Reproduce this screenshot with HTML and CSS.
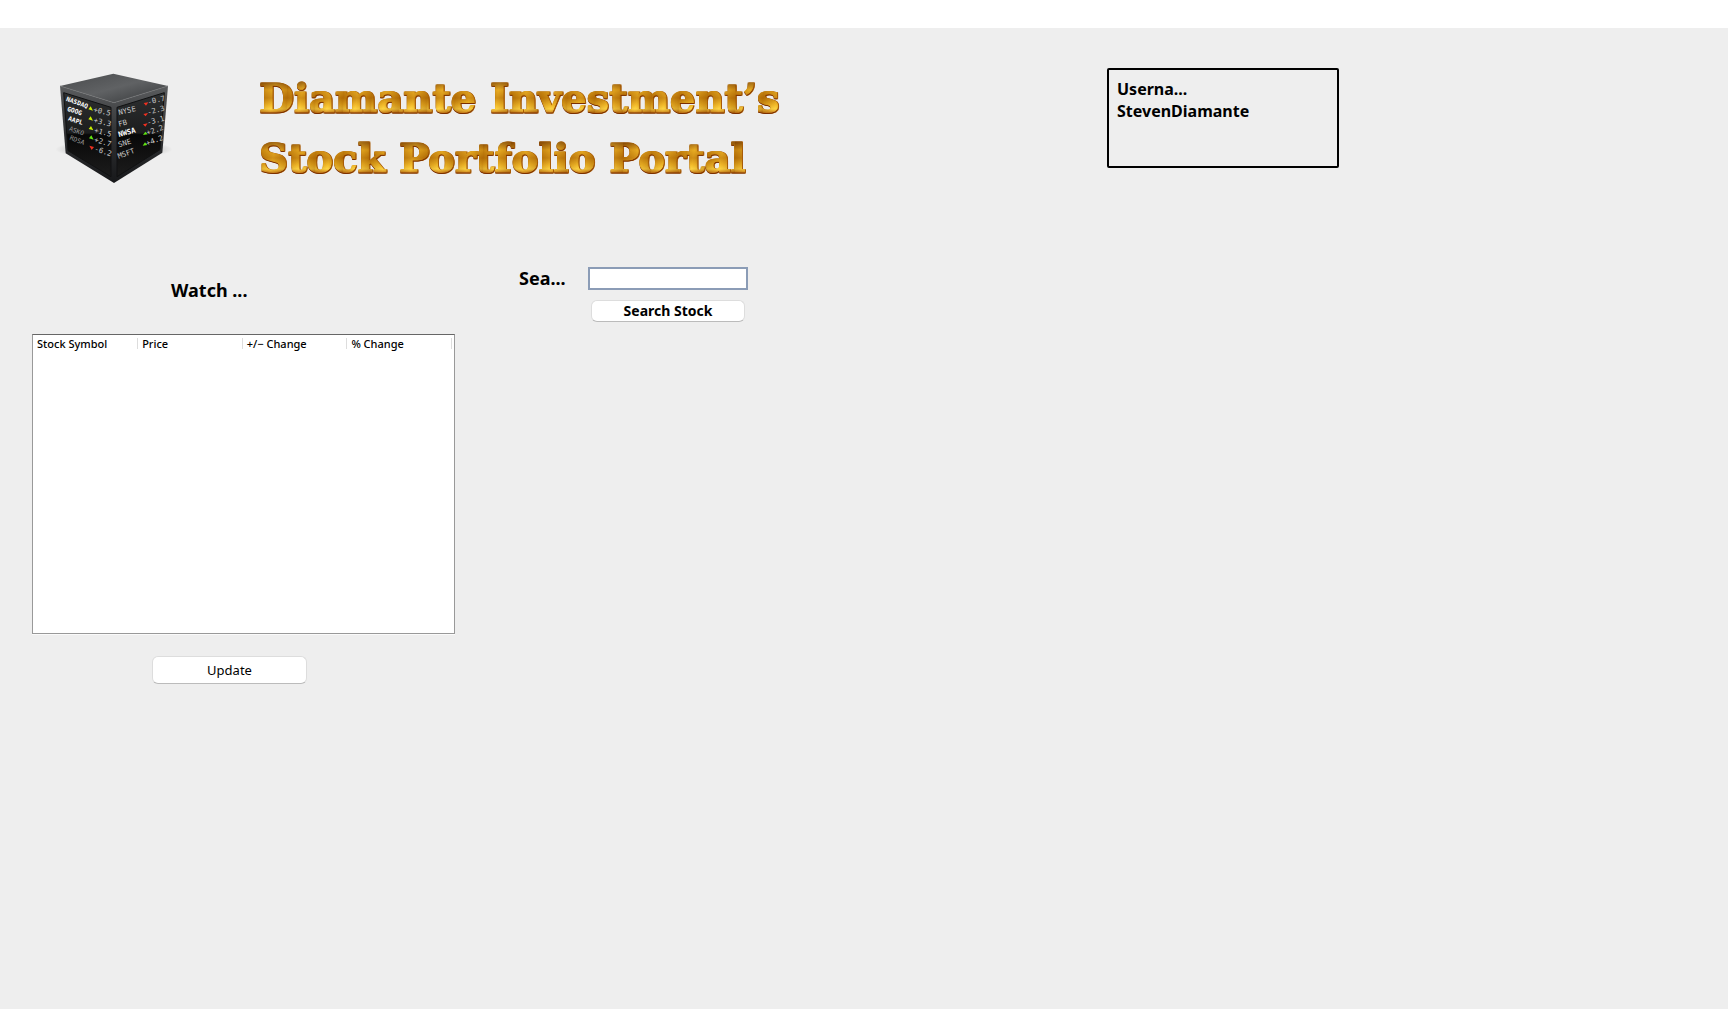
FILE: index.html
```html
<!DOCTYPE html>
<html lang="en">
<head>
<meta charset="utf-8">
<title>Stock Portfolio Portal</title>
<link rel="stylesheet" href="styles.css">
</head>
<body>
<div class="titlebar"></div>
<header class="header">
  <svg class="logo" viewBox="0 0 390 390" role="img" aria-label="Stock ticker cube">
    <defs>
      <linearGradient id="top" x1="0" y1="0" x2="1" y2="1"><stop offset="0" stop-color="#484a4c"/><stop offset=".5" stop-color="#606264"/><stop offset="1" stop-color="#343638"/></linearGradient>
      <linearGradient id="side" x1="0" y1="0" x2="0" y2="1"><stop offset="0" stop-color="#5a5c5e"/><stop offset=".5" stop-color="#303133"/><stop offset="1" stop-color="#17181a"/></linearGradient>
      <linearGradient id="panel" x1="0" y1="0" x2="0" y2="1"><stop offset="0" stop-color="#2d2f30"/><stop offset=".48" stop-color="#1c1d1e"/><stop offset=".5" stop-color="#080808"/><stop offset="1" stop-color="#1c1c1c"/></linearGradient>
      <radialGradient id="shade"><stop offset="0" stop-color="#777"/><stop offset="1" stop-color="#777" stop-opacity="0"/></radialGradient>
    </defs>
    <ellipse cx="192" cy="256" rx="176" ry="28" fill="url(#shade)"/>
    <path d="M30 66 192 116V357L47 268Z" fill="url(#side)"/>
    <path d="M192 116 354 66 337 266 192 357Z" fill="url(#side)"/>
    <path d="M30 66 190 29 354 66 192 116Z" fill="url(#top)"/>
    <path d="M30 66 192 116 354 66" fill="none" stroke="#727476" stroke-width="2"/>
    <path d="M41 86 183 130V338L54 260Z" fill="url(#panel)" stroke="#101112" stroke-width="3"/>
    <path d="M201 130 343 86 330 257 201 338Z" fill="url(#panel)" stroke="#101112" stroke-width="3"/>
    <g class="quote">
      <g class="bright">
        <text transform="translate(47 110) rotate(20)">NASDAQ</text>
        <text transform="translate(50 140) rotate(18)">GOOG</text>
        <text transform="translate(53 169) rotate(18)">AAPL</text>
      </g>
      <g class="dim">
        <text transform="translate(56 199) rotate(20)">ASKO</text>
        <text transform="translate(58 226) rotate(22)">RDSA</text>
      </g>
      <text transform="translate(129 143) rotate(14)">+0.5</text>
      <text transform="translate(130 175) rotate(14)">+3.3</text>
      <text transform="translate(131 205) rotate(15)">+1.5</text>
      <text transform="translate(131 233) rotate(17)">+2.7</text>
      <text transform="translate(132 261) rotate(18)">-6.2</text>
      <text transform="translate(207 153) rotate(-13)">NYSE</text>
      <text transform="translate(207 188) rotate(-14)">FB</text>
      <text class="strong" transform="translate(207 219) rotate(-15)">NWSA</text>
      <text transform="translate(207 250) rotate(-17)">SNE</text>
      <text transform="translate(206 284) rotate(-20)">MSFT</text>
      <text transform="translate(295 122) rotate(-14)">-0.7</text>
      <text transform="translate(294 153) rotate(-15)">-2.3</text>
      <text transform="translate(293 184) rotate(-16)">-3.1</text>
      <text transform="translate(292 214) rotate(-19)">+2.2</text>
      <text transform="translate(291 245) rotate(-20)">+4.2</text>
    </g>
    <path d="M115 136 122 127 129 140ZM115 166 122 157 129 170ZM116 195 123 186 130 199Z" fill="#c8f000"/>
    <path d="M117 223 124 214 131 227ZM279 213 286 203 293 211ZM278 245 285 235 292 243Z" fill="#62e612"/>
    <path d="M118 245 132 249 125 258ZM281 117 295 115 288 125ZM280 150 294 147 287 157ZM279 181 293 178 286 188Z" fill="#f03020"/>
  </svg>
  <h1 class="title"><span>Diamante Investment’s</span><span>Stock Portfolio Portal</span></h1>
  <section class="account"><div>Userna...</div><div>StevenDiamante</div></section>
</header>
<main class="main">
  <section class="watch">
    <h2 class="heading">Watch ...</h2>
    <div class="frame">
      <table class="stocks">
        <thead><tr><th scope="col">Stock Symbol</th><th scope="col">Price</th><th scope="col">+/− Change</th><th scope="col">% Change</th></tr></thead>
        <tbody></tbody>
      </table>
    </div>
    <button class="button update" type="button">Update</button>
  </section>
  <form class="search">
    <label class="heading" for="stock">Sea...</label>
    <input class="field" id="stock" type="text">
    <button class="button find" type="button">Search Stock</button>
  </form>
</main>
</body>
</html>
```
FILE: styles.css
```css
* { box-sizing: border-box; }
body {
  margin: 0;
  min-height: 100vh;
  background: #eee;
  color: #000;
  font-family: "Noto Sans", "Open Sans", sans-serif;
}
.titlebar { height: 28px; background: #fff; }
.header {
  display: flex;
  align-items: flex-start;
  padding: 36px 24px 0 50px;
}
.logo { width: 130px; height: 130px; flex: none; }
.quote { fill: #c8c8c8; font: 22px "DejaVu Sans Mono", monospace; }
.quote .bright { fill: #fff; font-weight: bold; font-size: 19px; }
.quote .strong { fill: #fff; font-weight: bold; }
.quote .dim { fill: #9a9a9a; font-size: 19px; }
.title {
  width: 848px;
  margin: 4px 0 0 79px;
  font: bold 40px/60px "DejaVu Serif", serif;
  filter: drop-shadow(0 1px 0 #7a2e00) drop-shadow(1px 0 0 #a85c08);
}
.title span {
  display: block;
  white-space: nowrap;
  background: linear-gradient(100deg, #7a3a0066, #ffe05a44, #7a3a0066) 0 0 / 28px 60px,
    linear-gradient(#8a4a00 15px, #e09a10 22px, #c07400 30px, #f0b01a 37px, #ffd23c 41px, #b86008 45px, #7a2e00 48px);
  background-clip: text;
  -webkit-background-clip: text;
  -webkit-text-stroke: 1px transparent;
  color: transparent;
}
.account {
  width: 232px;
  height: 100px;
  margin-top: 4px;
  padding: 8px;
  border: 2px solid #000;
  border-radius: 2px;
  font-size: 16px;
  font-weight: bold;
  line-height: 22px;
}
.main {
  display: flex;
  align-items: flex-start;
  gap: 64px;
  padding: 72px 32px 32px;
}
.watch { width: 423px; padding-top: 12px; }
.heading { margin: 0; font-size: 18px; font-weight: bold; line-height: 24px; }
.watch .heading { padding-left: 139px; }
.frame {
  height: 300px;
  margin-top: 32px;
  padding: 3px 2px 0 0;
  background: #fff;
  border: 1px solid #999;
  border-top-color: #666;
  box-shadow: 0 1px 0 #fafafa;
}
.stocks { width: 100%; table-layout: fixed; border-collapse: collapse; }
.stocks th {
  height: 11px;
  padding: 0 0 0 4px;
  border-right: 1px solid #ddd;
  font-size: 11px;
  font-weight: 500;
  line-height: 11px;
  text-align: left;
}
.button {
  border: 1px solid #ddd;
  border-bottom-color: #bbb;
  border-radius: 6px;
  padding: 0;
  background: #fff;
  color: #000;
  font-family: inherit;
}
.update {
  display: block;
  width: 155px;
  height: 28px;
  margin: 22px 0 0 120px;
  font-size: 13px;
}
.search {
  display: grid;
  grid-template-columns: 69px 160px;
  row-gap: 10px;
  align-items: center;
}
.field { height: 23px; border: 2px solid #8b9cb6; border-radius: 0; background: #fff; outline: 0; }
.find {
  grid-column: 2;
  justify-self: center;
  width: 154px;
  height: 22px;
  font-size: 14px;
  font-weight: bold;
  line-height: 18px;
}
```
